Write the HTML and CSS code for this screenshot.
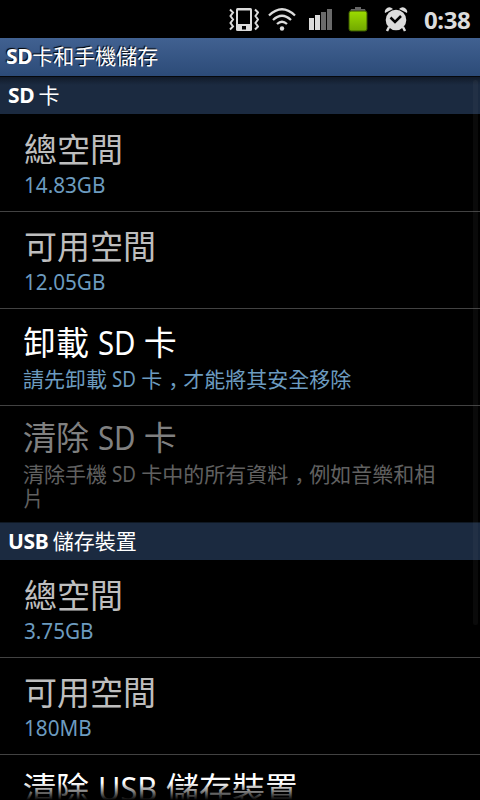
FILE: index.html
```
<!DOCTYPE html>
<html lang="zh-Hant">
<head>
    <meta charset="UTF-8">
    <meta name="viewport" content="width=device-width, initial-scale=1.0">
    <title>SD卡和手機儲存</title>
    <link rel="stylesheet" href="styles.css">
</head>
<body>
    <div class="screen">
        <div class="statusbar">
            <svg class="icon" width="30" height="24" viewBox="0 0 30 24">
                <path d="M8.500 0h13a1.500 1.500 0 0 1 1.500 1.500v20a1.500 1.500 0 0 1-1.500 1.500h-13a1.500 1.500 0 0 1-1.500-1.500V1.500a1.500 1.500 0 0 1 1.500-1.500z" fill="#dcdcdc"/>
                <path d="M9 2.500h12v13.500H9zM13 18h4v3.500h-4z" fill="#000"/>
                <path d="M1 1.500L4 4.500L1.500 8L4 11.500L1.500 15L4 18.500L1 21.500M26 1.500l3 3L26.500 8l2.500 3.500L26.500 15l2.500 3.500l-3 3" fill="none" stroke="#dcdcdc" stroke-width="2"/>
            </svg>
            <svg class="icon wifi" width="28" height="23" viewBox="0 0 28 23">
                <path d="M1 7.500Q14-5 27 7.500M5 12Q14 3.500 23 12M9 16Q14 11.500 19 16" fill="none" stroke="#dcdcdc" stroke-width="2.300"/>
                <circle cx="14" cy="20.500" r="2.200" fill="#dcdcdc"/>
            </svg>
            <svg class="icon signal" width="24" height="22" viewBox="0 0 24 22">
                <path d="M0 9h5v12H0zM6 6h5v15H6z" fill="#dcdcdc"/>
                <path d="M12 3h5v18h-5zM18 0h5v21h-5z" fill="#6a6a6a"/>
            </svg>
            <svg class="icon battery" width="20" height="25" viewBox="0 0 20 25">
                <defs>
                    <linearGradient id="charge" x1="0" y1="0" x2="0" y2="1">
                        <stop offset="0" stop-color="#9cdc00"/>
                        <stop offset="1" stop-color="#71a800"/>
                    </linearGradient>
                </defs>
                <path d="M7 0h6v2h4l1 3H2l1-3h4z" fill="#666"/>
                <rect x="1" y="4" width="18" height="20" rx="2" fill="url(#charge)" stroke="#385500"/>
            </svg>
            <svg class="icon alarm" width="24" height="25" viewBox="0 0 24 25">
                <path d="M1 6Q0 3 3 1Q6-1 9 2zM23 6q1-3-2-5q-3-2-6 1z" fill="#dcdcdc"/>
                <path d="M5 20l-2 4M19 20l2 4" stroke="#dcdcdc" stroke-width="2.500"/>
                <circle cx="12" cy="13" r="10.300" fill="#dcdcdc"/>
                <path d="M6.500 10.500l4.500 4.500l6-6" fill="none" stroke="#000" stroke-width="2.500"/>
            </svg>
            <span class="clock">0:38</span>
        </div>
        <div class="titlebar"><b>SD</b>卡和手機儲存</div>
        <div class="list">
            <div class="category first"><b>SD</b> 卡</div>
            <div class="row info">
                <div class="title">總空間</div>
                <div class="summary"><span class="num">14.83GB</span></div>
            </div>
            <div class="row info">
                <div class="title">可用空間</div>
                <div class="summary"><span class="num">12.05GB</span></div>
            </div>
            <div class="row action">
                <div class="title">卸載 <span class="sd">SD</span> 卡</div>
                <div class="summary">請先卸載 <span class="sd">SD</span> 卡<span class="comma">，</span>才能將其安全移除</div>
            </div>
            <div class="row action disabled">
                <div class="title">清除 <span class="sd">SD</span> 卡</div>
                <div class="summary">清除手機 <span class="sd">SD</span> 卡中的所有資料<span class="comma">，</span>例如音樂和相片</div>
            </div>
            <div class="category"><b>USB</b> 儲存裝置</div>
            <div class="row info">
                <div class="title">總空間</div>
                <div class="summary"><span class="num">3.75GB</span></div>
            </div>
            <div class="row info">
                <div class="title">可用空間</div>
                <div class="summary"><span class="num">180MB</span></div>
            </div>
            <div class="row action">
                <div class="title">清除 <span class="sd usb">USB</span> 儲存裝置</div>
            </div>
            <div class="scrollbar"></div>
            <div class="fade"></div>
        </div>
    </div>
</body>
</html>
```
FILE: styles.css
```
body {
    margin: 0;
    background: #000;
    font-family: "Noto Sans", "Noto Sans CJK TC", sans-serif;
}
.screen {
    display: flex;
    flex-direction: column;
    width: 480px;
    height: 800px;
    overflow: hidden;
    background: #000;
}
.statusbar {
    display: flex;
    flex: none;
    align-items: flex-start;
    box-sizing: border-box;
    height: 38px;
    padding: 8px 0 0 229px;
}
.icon {
    flex: none;
}
.wifi {
    margin-left: 9px;
}
.signal {
    margin: 1px 0 0 13px;
}
.battery {
    margin: -1px 0 0 15px;
}
.alarm {
    margin: -1px 0 0 16px;
}
.clock {
    margin-left: 16px;
    color: #dcdcdc;
    font-size: 24px;
    font-weight: bold;
    line-height: 23px;
    letter-spacing: -0.4px;
}
.titlebar {
    flex: none;
    box-sizing: border-box;
    height: 39px;
    padding-left: 6px;
    border-bottom: 1px solid #05080c;
    background: linear-gradient(#416191, #2c4b78);
    color: #fff;
    font-size: 21px;
    line-height: 36px;
    text-shadow: -1px -1px 1px #000;
}
.titlebar b,
.category b {
    letter-spacing: -0.4px;
}
.list {
    position: relative;
    flex: 1;
    overflow: hidden;
}
.category {
    box-sizing: border-box;
    height: 39px;
    padding-left: 8px;
    border-top: 1px solid #0f1823;
    border-bottom: 1px solid #000;
    background: #1b2a40;
    color: #fff;
    font-size: 21px;
    line-height: 37px;
    word-spacing: -1px;
}
.first {
    height: 38px;
    border-top: 0;
    background: linear-gradient(#111b2a, #1b2a40 8px);
    line-height: 36px;
}
.row {
    box-sizing: border-box;
    height: 97px;
    padding: 12px 30px 0 24px;
    border-bottom: 1px solid #424242;
    color: #fff;
}
.title {
    font-size: 33px;
    line-height: 45px;
    white-space: nowrap;
}
.action {
    padding-top: 11px;
    padding-left: 23px;
}
.action .title {
    line-height: 46px;
}
.summary {
    height: 24px;
    color: #6c9bbf;
    font-size: 21px;
    line-height: 24px;
}
/* latin text is slightly condensed */
.num {
    display: inline-block;
    font-size: 22px;
    transform: scaleX(0.94);
    transform-origin: left;
}
.sd {
    display: inline-block;
    margin-right: -0.14em;
    transform: scaleX(0.89);
    transform-origin: left;
}
.sd.usb {
    margin-right: -0.12em;
    transform: scaleX(0.93);
}
.summary .sd {
    margin-right: -0.17em;
}
/* comma sits low in the middle of its cell */
.comma {
    display: inline-block;
    width: 21px;
    font-family: "Noto Sans CJK SC", sans-serif;
    text-indent: 6px;
    white-space: nowrap;
}
.info .title {
    color: #bebebe;
}
.disabled {
    height: 116px;
    padding-top: 9px;
    border-bottom: 0;
}
.disabled .title {
    color: #808080;
}
.disabled .summary {
    color: #606060;
}
.scrollbar {
    position: absolute;
    top: 3px;
    right: 2px;
    width: 5px;
    height: 545px;
    border-radius: 2px;
    background: rgba(128, 128, 128, 0.08);
}
.fade {
    position: absolute;
    right: 0;
    bottom: 0;
    left: 0;
    height: 17px;
    background: linear-gradient(rgba(0, 0, 0, 0), #000);
}
```
